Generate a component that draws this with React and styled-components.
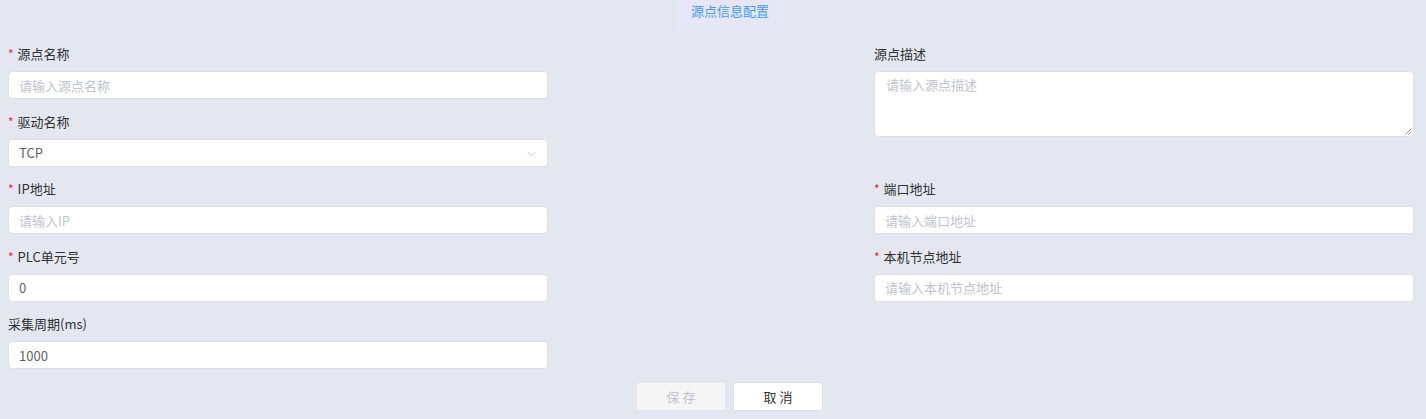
import styled, { createGlobalStyle } from 'styled-components';

const GlobalStyle = createGlobalStyle`
  html, body {
    margin: 0;
    padding: 0;
    background: #e4e7f0;
    font-family: "Noto Sans CJK SC", "Noto Sans", sans-serif;
  }
`;

const fields = [
  { label: '源点名称', required: true, placeholder: '请输入源点名称' },
  { label: '源点描述', textarea: true, placeholder: '请输入源点描述' },
  { label: '驱动名称', required: true, value: 'TCP', select: true },
  { label: 'IP地址', required: true, placeholder: '请输入IP' },
  { label: '端口地址', required: true, placeholder: '请输入端口地址' },
  { label: 'PLC单元号', required: true, value: '0' },
  { label: '本机节点地址', required: true, placeholder: '请输入本机节点地址' },
  { label: '采集周期(ms)', value: '1000' },
];

export default function App() {
  return (
    <Page>
      <GlobalStyle />
      <Header>
        <Tab>源点信息配置</Tab>
      </Header>
      <Form>
        {fields.map((f) => (
          <Item key={f.label} $span={f.textarea}>
            <Label>
              {f.required && <Star>*</Star>}
              {f.label}
            </Label>
            {f.textarea ? (
              <TextArea>
                <Placeholder>{f.placeholder}</Placeholder>
                <Resize viewBox="0 0 8 8">
                  <path d="M7.5 1.5 L1.5 7.5 M7.5 4.5 L4.5 7.5" stroke="#777" strokeWidth="0.8" fill="none" />
                </Resize>
              </TextArea>
            ) : (
              <Input>
                {f.value ? <Value>{f.value}</Value> : <Placeholder>{f.placeholder}</Placeholder>}
                {f.select && (
                  <Chevron viewBox="0 0 10 6">
                    <path d="M1 1 L5 5 L9 1" stroke="#b8bcc4" strokeWidth="1" fill="none" />
                  </Chevron>
                )}
              </Input>
            )}
          </Item>
        ))}
      </Form>
      <Footer>
        <Button $disabled>保 存</Button>
        <Button>取 消</Button>
      </Footer>
    </Page>
  );
}

const Page = styled.div`
  width: 1426px;
  height: 419px;
  background: #e4e7f0;
  overflow: hidden;
`;

const Header = styled.div`
  display: flex;
  justify-content: center;
  padding-left: 34px;
`;

const Tab = styled.div`
  height: 30px;
  padding: 0 14px;
  line-height: 22px;
  font-size: 13px;
  color: #409eff;
  background: #e6e6f7;
`;

const Form = styled.div`
  display: grid;
  grid-template-columns: 540px 540px;
  justify-content: space-between;
  row-gap: 12.5px;
  padding: 14px 12px 0 8px;
`;

const Item = styled.div`
  grid-row: ${({ $span }) => ($span ? 'span 2' : 'auto')};
  align-self: start;
`;

const Label = styled.div`
  height: 20px;
  line-height: 20px;
  margin-bottom: 7px;
  font-size: 13px;
  color: #303133;
`;

const Star = styled.span`
  color: #f5222d;
  font-size: 12px;
  margin-right: 4px;
`;

const Input = styled.div`
  position: relative;
  box-sizing: border-box;
  height: 28px;
  display: flex;
  align-items: center;
  padding: 0 10px;
  background: #fff;
  border: 1px solid #dcdfe6;
  border-radius: 4px;
  font-size: 13px;
`;

const TextArea = styled.div`
  position: relative;
  box-sizing: border-box;
  height: 66px;
  padding: 3px 11px;
  background: #fff;
  border: 1px solid #dcdfe6;
  border-radius: 4px;
  font-size: 13px;
  line-height: 20px;
`;

const Placeholder = styled.span`
  color: #c0c4cc;
`;

const Value = styled.span`
  color: #606266;
`;

const Chevron = styled.svg`
  position: absolute;
  right: 11px;
  top: 11px;
  width: 9px;
  height: 6px;
`;

const Resize = styled.svg`
  position: absolute;
  right: 1px;
  bottom: 1px;
  width: 8px;
  height: 8px;
`;

const Footer = styled.div`
  display: flex;
  justify-content: center;
  gap: 7px;
  margin-top: 13px;
  padding-left: 33px;
`;

const Button = styled.div`
  box-sizing: border-box;
  width: 90px;
  height: 29px;
  display: flex;
  align-items: center;
  justify-content: center;
  font-size: 13px;
  border-radius: 3px;
  border: 1px solid ${({ $disabled }) => ($disabled ? '#e4e7ed' : '#dcdfe6')};
  background: ${({ $disabled }) => ($disabled ? '#f5f5f5' : '#fff')};
  color: ${({ $disabled }) => ($disabled ? '#c0c4cc' : '#333')};
`;
